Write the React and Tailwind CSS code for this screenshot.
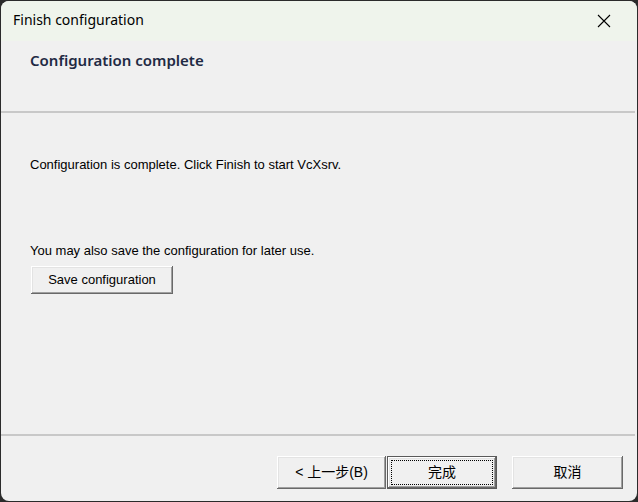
import React from "react";

// classic 3d push button
function Btn({ children, className = "", isDefault = false }) {
    const bevel = "shadow-[inset_-1px_-1px_#696969,inset_1px_1px_#ffffff,inset_-2px_-2px_#a0a0a0,inset_2px_2px_#e3e3e3]";
    if (isDefault) {
        return (
            <div className={`border border-[#5a5a5a] bg-[#f0f0f0] ${className}`}>
                <div className={`w-full h-full p-[3px] ${bevel}`}>
                    <div className="w-full h-full border border-dotted border-black flex items-center justify-center">
                        {children}
                    </div>
                </div>
            </div>
        );
    }
    return (
        <div className={`bg-[#f0f0f0] flex items-center justify-center ${bevel} ${className}`}>
            {children}
        </div>
    );
}

export default function App() {
    const ui = { fontFamily: '"Segoe UI", "Noto Sans", "Open Sans", sans-serif' };
    const body = { fontFamily: 'Tahoma, "Liberation Sans", "Noto Sans CJK SC", sans-serif' };

    return (
        <div className="w-[638px] h-[502px] bg-[#2b2b2b] p-px">
            <div className="w-full h-full bg-[#f0f0f0] rounded-lg overflow-hidden flex flex-col">
                {/* title bar */}
                <div className="h-[40px] bg-[#eff4ec] flex items-center justify-between pl-[12px] pr-[26px] pb-[3px]" style={ui}>
                    <span className="text-[14px] text-black">Finish configuration</span>
                    <svg width="14" height="14" viewBox="0 0 14 14" className="mt-[3px]">
                        <path d="M1 1 L13 13 M13 1 L1 13" stroke="#000" strokeWidth="1.1" />
                    </svg>
                </div>

                {/* wizard header */}
                <div className="h-[70px] pl-[29px] pt-[7px]" style={ui}>
                    <span className="text-[15px] font-semibold text-[#1f2a44]">Configuration complete</span>
                </div>
                <div className="h-[2px] bg-[#c8c8c8] mr-[2px]" />

                {/* body */}
                <div className="flex-1 pl-[29px] pt-[44px] text-[13px] text-black" style={body}>
                    <p className="leading-[16px]">Configuration is complete. Click Finish to start VcXsrv.</p>
                    <p className="leading-[16px] mt-[70px]">You may also save the configuration for later use.</p>
                    <Btn className="w-[142px] h-[28px] mt-[7px] ml-px">Save configuration</Btn>
                </div>

                <div className="h-[2px] bg-[#c8c8c8] mr-[2px]" />

                {/* footer buttons */}
                <div className="h-[65px] flex items-start pt-[20px] pl-[276px] text-[14px]" style={body}>
                    <Btn className="w-[109px] h-[33px]">&lt; 上一步(<span>B</span>)</Btn>
                    <Btn isDefault className="w-[110px] h-[33px] ml-px">完成</Btn>
                    <Btn className="w-[111px] h-[33px] ml-[15px]">取消</Btn>
                </div>
            </div>
        </div>
    );
}
